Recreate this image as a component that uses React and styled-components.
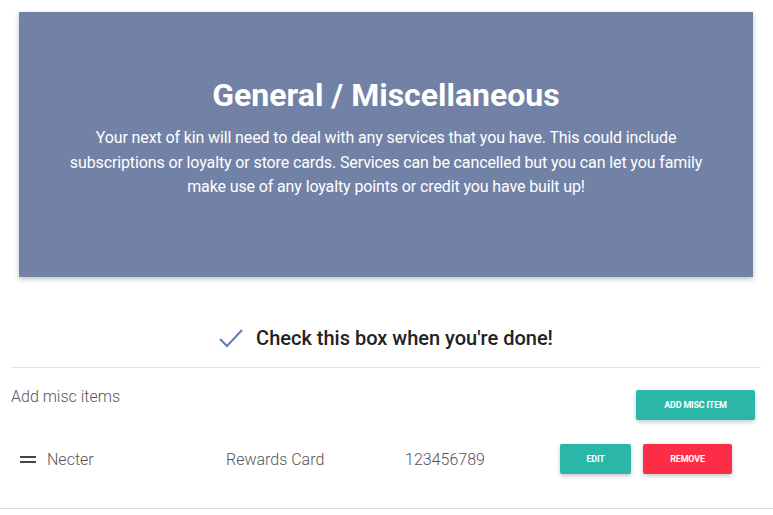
import React from 'react'
import styled, { createGlobalStyle } from 'styled-components'

const GlobalStyle = createGlobalStyle`
  body {
    margin: 0;
    background: #fff;
    font-family: Roboto, "Liberation Sans", sans-serif;
  }
`

const Page = styled.div`
  width: 773px;
  height: 515px;
  overflow: hidden;
`

const Banner = styled.div`
  margin: 12px 20px 0 19px;
  height: 265px;
  box-sizing: border-box;
  padding: 64px 20px 0;
  background: #7282a6;
  color: #fff;
  text-align: center;
  box-shadow: 0 2px 5px rgba(0, 0, 0, 0.25);
`

const Title = styled.h1`
  margin: 0;
  font-size: 32px;
  line-height: 38px;
  font-weight: 700;
`

const Intro = styled.p`
  margin: 12px auto 0;
  max-width: 650px;
  font-size: 16px;
  line-height: 24.5px;
  font-weight: 400;
  letter-spacing: -0.12px;
`

const DoneRow = styled.label`
  display: flex;
  align-items: center;
  justify-content: center;
  gap: 13px;
  margin: 49px 12px 0 11px;
  padding-bottom: 17px;
  border-bottom: 1px solid #e2e2e2;
  font-size: 20px;
  font-weight: 500;
  color: #222;
`

const Section = styled.div`
  display: flex;
  justify-content: space-between;
  align-items: flex-start;
  padding: 19px 18px 0 11px;
`

const Label = styled.span`
  font-size: 16px;
  font-weight: 300;
  color: #555;
`

const Button = styled.button`
  height: 30px;
  padding: 0;
  width: ${p => p.width}px;
  border: none;
  border-radius: 2px;
  background: ${p => (p.danger ? '#fe2d47' : '#2bb7a8')};
  color: #fff;
  font-family: Roboto, "Liberation Sans", sans-serif;
  font-size: 9px;
  font-weight: 700;
  letter-spacing: -0.2px;
  text-transform: uppercase;
  box-shadow: 0 2px 4px rgba(0, 0, 0, 0.22);
`

const AddButton = styled(Button)`
  margin-top: 3px;
`

const ItemRow = styled.div`
  display: grid;
  grid-template-columns: 36px 179px 179px 155px 83px auto;
  align-items: center;
  margin-top: 24px;
  padding: 0 0 34px 11px;
  border-bottom: 1px solid #dcdcdc;
  font-size: 16px;
  font-weight: 300;
  color: #555;
`

const Handle = styled.span`
  display: flex;
  flex-direction: column;
  gap: 3px;
  width: 16px;
  margin-left: 9px;

  &::before,
  &::after {
    content: '';
    height: 2px;
    background: #444;
  }
`

const Check = () => (
  <svg width="24" height="20" viewBox="0 0 24 20" fill="none">
    <path d="M1 11 L8 18 L23 2" stroke="#5b7fb5" strokeWidth="2" />
  </svg>
)

export default function App() {
  return (
    <Page>
      <GlobalStyle />
      <Banner>
        <Title>General / Miscellaneous</Title>
        <Intro>
          Your next of kin will need to deal with any services that you have. This could include
          subscriptions or loyalty or store cards. Services can be cancelled but you can let you family
          make use of any loyalty points or credit you have built up!
        </Intro>
      </Banner>
      <DoneRow>
        <Check />
        Check this box when you're done!
      </DoneRow>
      <Section>
        <Label>Add misc items</Label>
        <AddButton width={119}>Add misc item</AddButton>
      </Section>
      <ItemRow>
        <Handle />
        <span>Necter</span>
        <span>Rewards Card</span>
        <span>123456789</span>
        <Button width={71}>Edit</Button>
        <Button danger width={89}>Remove</Button>
      </ItemRow>
    </Page>
  )
}
